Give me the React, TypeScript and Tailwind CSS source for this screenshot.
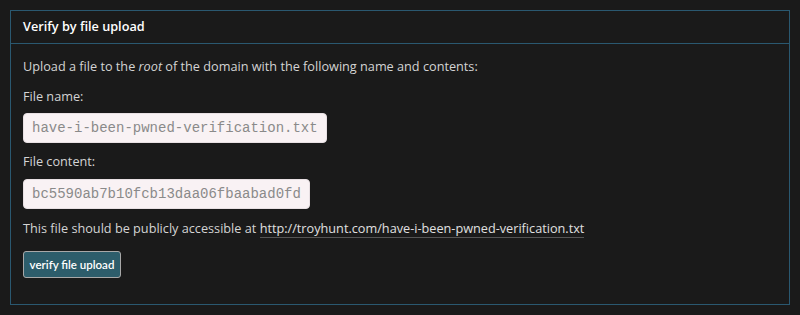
export default function App() {
  return (
    <div className="min-h-[315px] bg-[#1a1a1a] p-[10px] font-['Open_Sans',sans-serif] text-[12.7px] text-[#d4d4d4]">
      <div className="border border-[#2a5870]">
        {/* Header */}
        <div className="h-[33px] border-b border-[#2a5870] px-3 flex items-center">
          <h3 className="text-[12.7px] font-semibold text-white">Verify by file upload</h3>
        </div>

        {/* Body */}
        <div className="px-3 pt-3 pb-[26px]">
          <p className="leading-5">
            Upload a file to the <em>root</em> of the domain with the following name and contents:
          </p>
          <p className="leading-5 mt-[10px]">File name:</p>
          <div className="mt-[7px]">
            <code className="inline-block h-[30px] px-[8px] leading-[28px] rounded-[4px] bg-[#f9f2f4] border border-[#e8e0e3] font-['Liberation_Mono',monospace] text-[14px] text-[#8a8a8a]">
              have-i-been-pwned-verification.txt
            </code>
          </div>
          <p className="leading-5 mt-2">File content:</p>
          <div className="mt-2">
            <code className="inline-block h-[30px] px-[8px] leading-[28px] rounded-[4px] bg-[#f9f2f4] border border-[#e8e0e3] font-['Liberation_Mono',monospace] text-[14px] text-[#8a8a8a]">
              bc5590ab7b10fcb13daa06fbaabad0fd
            </code>
          </div>
          <p className="leading-5 mt-[9px]">
            This file should be publicly accessible at{" "}
            <a className="border-b border-[#555] text-[#e0e0e0]" href="#">
              http://troyhunt.com/have-i-been-pwned-verification.txt
            </a>
          </p>
          <button className="mt-[13px] h-[27px] w-[98px] rounded-[3px] bg-[#2d5d6b] border border-[#a8a8a8] text-white text-[11.5px] font-['Lato',sans-serif] font-semibold">
            verify file upload
          </button>
        </div>
      </div>
    </div>
  );
}
